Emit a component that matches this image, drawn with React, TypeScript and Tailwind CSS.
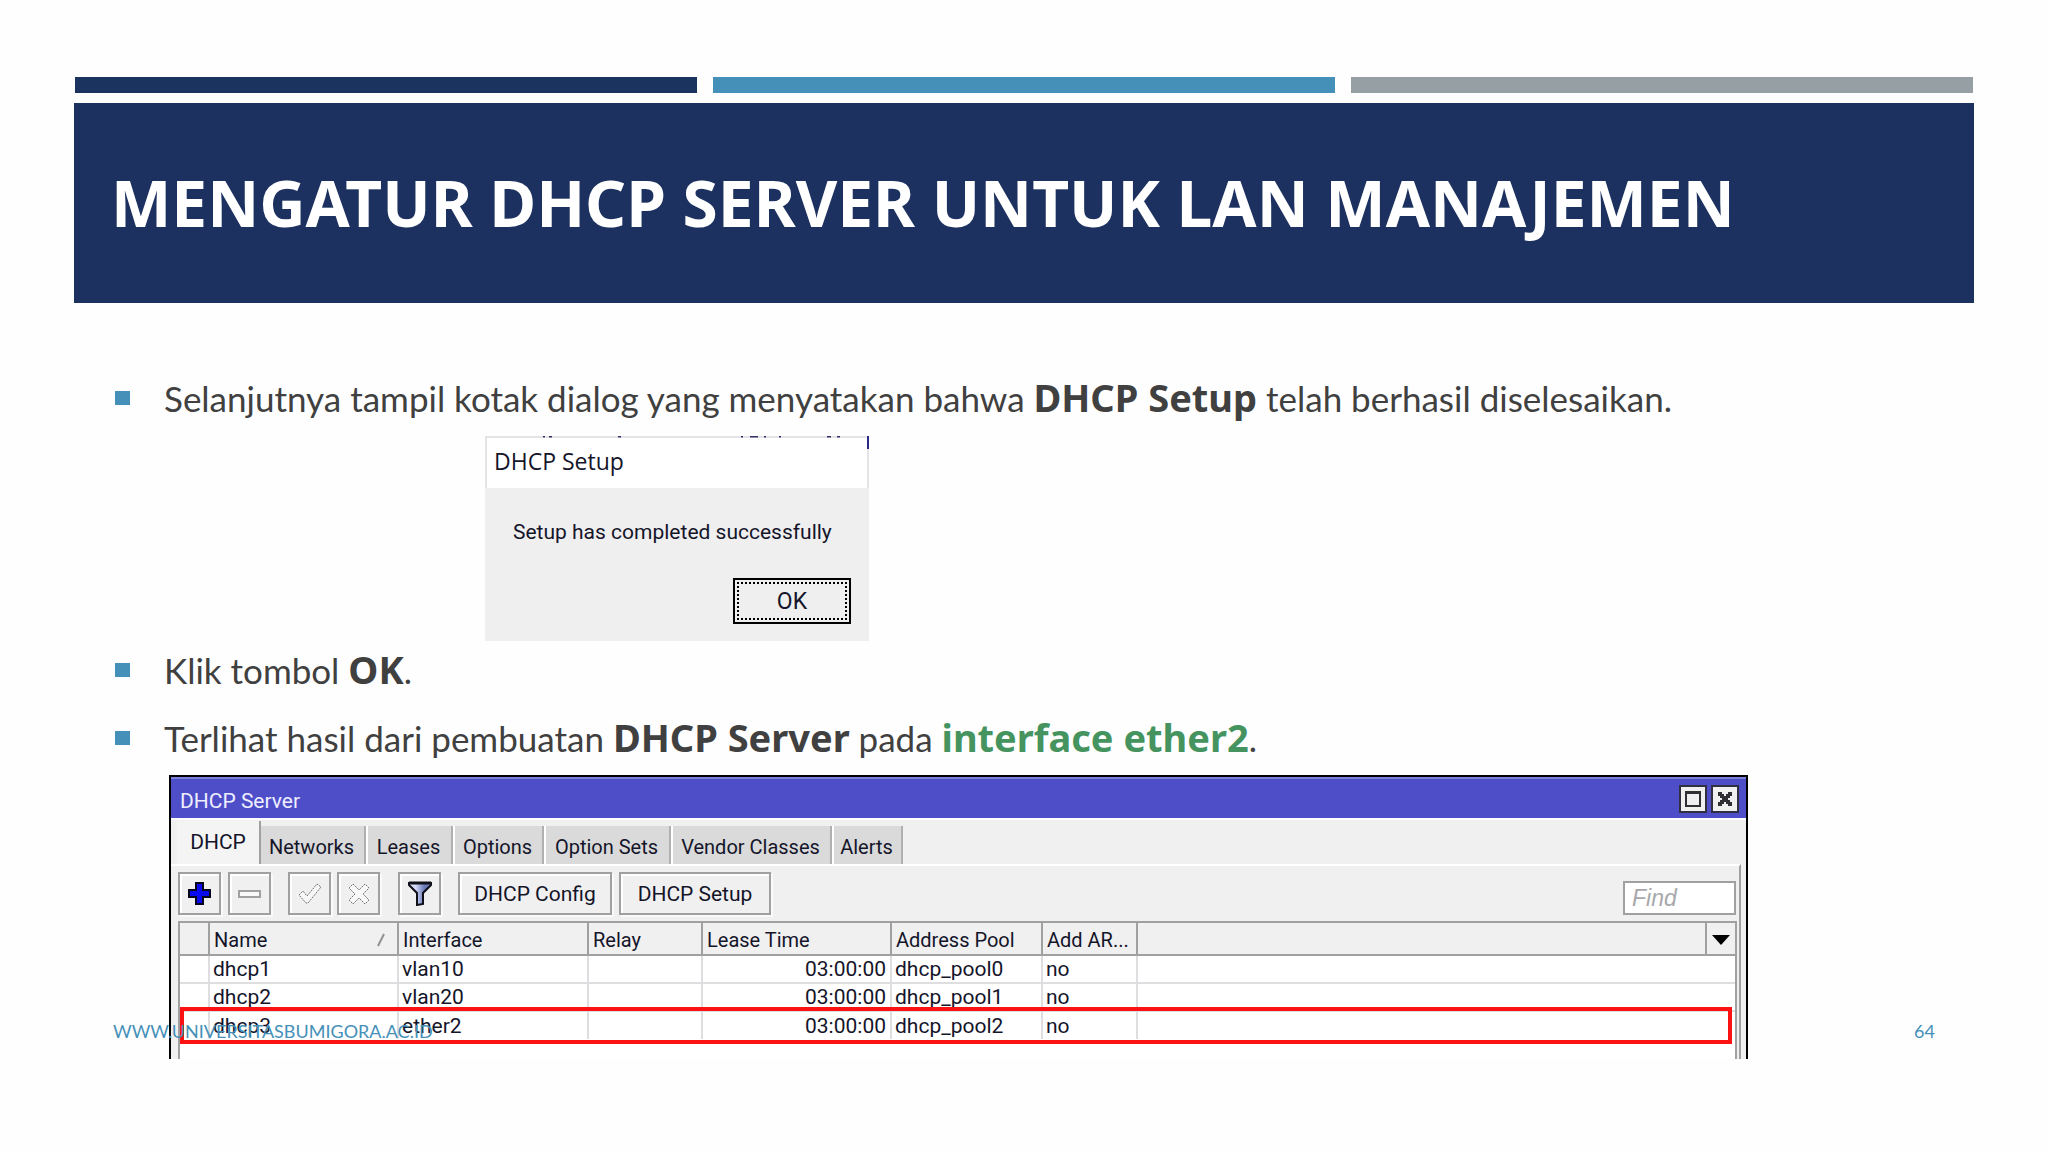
import type { ReactNode } from "react";

const tabs = ["Networks", "Leases", "Options", "Option Sets", "Vendor Classes", "Alerts"];
const tabWidths = ["w-[105px]", "w-[87px]", "w-[91px]", "w-[127px]", "w-[161px]", "w-[71px]"];

const leases = [
  { name: "dhcp1", iface: "vlan10", time: "03:00:00", pool: "dhcp_pool0", arp: "no" },
  { name: "dhcp2", iface: "vlan20", time: "03:00:00", pool: "dhcp_pool1", arp: "no" },
  { name: "dhcp3", iface: "ether2", time: "03:00:00", pool: "dhcp_pool2", arp: "no" },
];

function Bullet({ children }: { children: ReactNode }) {
  return (
    <div className="flex items-center gap-[34px] pl-[41px] text-[35px] leading-[48px] text-[#404040] [&_b]:font-['Noto_Sans',sans-serif] [&_b]:text-[38px] [&_b]:leading-none">
      <span className="h-[14px] w-[15px] shrink-0 bg-[#4590b8]" />
      <p>{children}</p>
    </div>
  );
}

function ToolButton({ label, children, className = "" }: { label: string; children: ReactNode; className?: string }) {
  return (
    <button
      aria-label={label}
      className={`flex h-[43px] w-[43px] items-center justify-center border-2 border-[#a0a0a0] bg-[#f0f0f0] shadow-[inset_2px_2px_0_#fff,2px_2px_0_#fafafa] ${className}`}
    >
      {children}
    </button>
  );
}

function SetupDialog() {
  return (
    <section aria-label="DHCP Setup" className="ml-[411px] flex h-[205px] w-[384px] flex-col bg-[#f0eff0] font-[Roboto,sans-serif] text-[#15152a]">
      <div className="relative flex h-[52px] items-center border-x-2 border-t-2 border-[#e4e4e6] bg-white pb-[3px] pl-[7px]">
        <h2 className="font-['Open_Sans',sans-serif] text-[23px]">DHCP Setup</h2>
        <svg className="absolute -top-[2px] left-0 h-[14px] w-[382px]" viewBox="0 0 382 14" aria-hidden="true">
          <path d="M56 0h2M62 0h3M131 0h3M254 0h2M263 0h8M277 0h2M292 0h2M340 0h4M350 0h3" stroke="#33336a" strokeWidth="3" />
          <path d="M381 0v13" stroke="#2a2a88" strokeWidth="2" />
        </svg>
      </div>
      <p className="mt-[29px] pl-[28px] text-[21px] leading-[30px]">Setup has completed successfully</p>
      <button className="mt-[31px] mr-[18px] h-[46px] w-[118px] self-end border-2 border-black bg-[#f0eff0] p-[2px] text-[23px]">
        <span className="flex h-full items-center justify-center border-2 border-dotted border-black pt-[2px]">OK</span>
      </button>
    </section>
  );
}

function ServerWindow() {
  return (
    <section aria-label="DHCP Server" className="mr-[226px] ml-[95px] flex h-[284px] flex-col overflow-hidden border-x-2 border-t-2 border-black bg-[#f0f0f1] font-[Roboto,sans-serif] text-[21px] text-[#15152a]">
      <header className="flex h-[41px] shrink-0 items-center justify-between border-t-2 border-[#7a80d8] bg-[#4f4ec9] pr-[7px] pl-[9px]">
        <h2 className="pt-[6px] text-[#eeeeff]">DHCP Server</h2>
        <div className="flex gap-1">
          <button aria-label="Maximize" className="flex h-[28px] w-[28px] items-center justify-center border-2 border-[#303040] bg-[#f0f0f0]">
            <svg className="h-[18px] w-[18px]" viewBox="0 0 18 18" aria-hidden="true">
              <path d="M1 1h16v3H1z" fill="#303034" />
              <path d="M2 2h14v14H2z" fill="none" stroke="#303034" strokeWidth="2" />
            </svg>
          </button>
          <button aria-label="Close" className="flex h-[28px] w-[28px] items-center justify-center border-2 border-[#303040] bg-[#f0f0f0]">
            <svg className="h-[16px] w-[16px]" viewBox="0 0 16 16" aria-hidden="true">
              <path d="M1 1h4v2h2v2h2v-2h2v-2h4v4h-2v2h-2v2h2v2h2v4h-4v-2h-2v-2h-2v2h-2v2h-4v-4h2v-2h2v-2h-2v-2h-2z" fill="#303034" />
            </svg>
          </button>
        </div>
      </header>

      <nav role="tablist" className="flex h-[46px] shrink-0 items-end border-t-2 border-white pl-[6px]">
        <button role="tab" aria-selected="true" className="h-[43px] w-[84px] border-r-2 border-[#a0a0a0] bg-[#f4f4f5]">
          DHCP
        </button>
        {tabs.map((tab, i) => (
          <button
            key={tab}
            role="tab"
            aria-selected="false"
            className={`h-[38px] shrink-0 border-r-2 border-[#b0b0b0] bg-[#dadada] pt-[3px] pr-[2px] text-center text-[20px] whitespace-nowrap ${i > 0 ? "border-l-2 border-l-white" : ""} ${tabWidths[i]}`}
          >
            {tab}
          </button>
        ))}
      </nav>

      <div className="mr-[5px] flex grow flex-col border-t-2 border-r-2 border-t-white border-r-[#a0a0a0] pr-[2px] pl-[7px]">
        <div className="flex shrink-0 items-end pt-[6px] pb-[6px]">
          <ToolButton label="Add">
            <svg className="h-[23px] w-[23px]" viewBox="0 0 23 23" aria-hidden="true">
              <path d="M8 1h7v7h7v7h-7v7H8v-7H1V8h7z" fill="#0a0af0" stroke="#05051e" strokeWidth="2" />
            </svg>
          </ToolButton>
          <ToolButton label="Remove" className="ml-[7px]">
            <svg className="h-[8px] w-[23px]" viewBox="0 0 23 8" aria-hidden="true">
              <path d="M1 1h21v6H1z" fill="#f8f8f8" stroke="#a0a0a0" strokeWidth="2" />
            </svg>
          </ToolButton>
          <ToolButton label="Enable" className="ml-[17px]">
            <svg className="h-[22px] w-[24px]" viewBox="0 0 24 22" aria-hidden="true">
              <path d="M1 12l4-4 4 5L19 1l4 3L10 20H8z" fill="#f8f8f8" stroke="#707070" strokeWidth="1" strokeDasharray="2 1" />
            </svg>
          </ToolButton>
          <ToolButton label="Disable" className="ml-[6px]">
            <svg className="h-[22px] w-[22px]" viewBox="0 0 22 22" aria-hidden="true">
              <path d="M5 1l6 6 6-6 4 4-6 6 6 6-4 4-6-6-6 6-4-4 6-6-6-6z" fill="#f8f8f8" stroke="#707070" strokeWidth="1" strokeDasharray="2 1" />
            </svg>
          </ToolButton>
          <ToolButton label="Filter" className="ml-[18px]">
            <svg className="h-[25px] w-[24px]" viewBox="0 0 24 25" aria-hidden="true">
              <defs>
                <linearGradient id="funnel">
                  <stop offset="0.3" stopColor="#d4daf8" />
                  <stop offset="0.7" stopColor="#6878b8" />
                </linearGradient>
              </defs>
              <path d="M1 2h22v2l-8 8v11l-6 1V12L1 4z" fill="url(#funnel)" stroke="#101018" strokeWidth="2" />
              <path d="M1 2h22" stroke="#101018" strokeWidth="3" />
            </svg>
          </ToolButton>
          <button className="ml-[17px] h-[43px] w-[154px] border-2 border-[#a0a0a0] bg-[#f0f0f0] pt-[2px] shadow-[inset_2px_2px_0_#fff,2px_2px_0_#fafafa]">
            DHCP Config
          </button>
          <button className="ml-[7px] h-[43px] w-[152px] border-2 border-[#a0a0a0] bg-[#f0f0f0] pt-[2px] shadow-[inset_2px_2px_0_#fff,2px_2px_0_#fafafa]">
            DHCP Setup
          </button>
          <input
            aria-label="Find"
            placeholder="Find"
            className="mr-px ml-auto h-[34px] w-[113px] border-2 border-[#a0a0a0] bg-white px-[7px] font-['Liberation_Sans',sans-serif] text-[23px] italic placeholder:text-[#a8a8ac]"
          />
        </div>

        <div className="relative grow border-x-2 border-t-2 border-[#a0a0a0] bg-white">
          <table className="w-full table-fixed border-collapse text-left leading-[24px]">
            <colgroup>
              <col className="w-[29px]" />
              <col className="w-[189px]" />
              <col className="w-[190px]" />
              <col className="w-[114px]" />
              <col className="w-[189px]" />
              <col className="w-[151px]" />
              <col className="w-[95px]" />
              <col />
              <col className="w-[29px]" />
            </colgroup>
            <thead>
              <tr className="h-[32px] border-b-2 border-[#a0a0a0] bg-[#f0f0f1] text-[20px] [&>th]:p-0 [&>th]:pt-[2px] [&>th]:pl-[4px] [&>th]:font-normal [&>th]:whitespace-nowrap [&>th:not(:last-child)]:border-r-2 [&>th:not(:last-child)]:border-[#a0a0a0]">
                <th />
                <th>
                  <div className="flex items-center justify-between pr-[10px]">
                    Name
                    <svg className="h-[14px] w-[10px]" viewBox="0 0 10 14" aria-hidden="true">
                      <path d="M1 13L7 1" stroke="#909090" strokeWidth="2" />
                    </svg>
                  </div>
                </th>
                <th>Interface</th>
                <th>Relay</th>
                <th>Lease Time</th>
                <th>Address Pool</th>
                <th>Add AR...</th>
                <th />
                <th>
                  <button aria-label="Choose columns" className="flex w-full items-center pl-px">
                    <svg className="h-[10px] w-[18px]" viewBox="0 0 18 10" aria-hidden="true">
                      <path d="M0 0h18L9 10z" fill="#000" />
                    </svg>
                  </button>
                </th>
              </tr>
            </thead>
            <tbody>
              {leases.map((row) => (
                <tr
                  key={row.name}
                  className="h-[28px] border-b-2 border-[#dedee0] last:border-b-0 [&>td]:p-0 [&>td]:pl-[3px] [&>td:nth-child(-n+7)]:border-r-2 [&>td:nth-child(-n+7)]:border-[#dedee0]"
                >
                  <td />
                  <td>{row.name}</td>
                  <td>{row.iface}</td>
                  <td />
                  <td className="text-right">
                    <span className="pr-[4px]">{row.time}</span>
                  </td>
                  <td>{row.pool}</td>
                  <td>{row.arp}</td>
                  <td colSpan={2} />
                </tr>
              ))}
            </tbody>
          </table>
          <div className="pointer-events-none absolute top-[84px] right-[3px] left-0 h-[37px] border-4 border-[#fb1212]" />
        </div>
      </div>
    </section>
  );
}

export default function App() {
  return (
    <main className="relative min-h-screen bg-[#fefefe] px-[74px] pt-[77px] font-[Lato,sans-serif]">
      <div className="grid grid-cols-3 gap-4 px-px">
        <div className="h-[16px] bg-[#1b335f]" />
        <div className="h-[16px] bg-[#4590b8]" />
        <div className="h-[16px] bg-[#969fa4]" />
      </div>
      <div className="mt-[10px] flex h-[200px] items-center bg-[#1c315f] pl-[37px]">
        <h1 className="font-['Noto_Sans',sans-serif] text-[64px] leading-[64px] font-bold text-white">MENGATUR DHCP SERVER UNTUK LAN MANAJEMEN</h1>
      </div>

      <div className="pt-[71px]">
        <Bullet>
          Selanjutnya tampil kotak dialog yang menyatakan bahwa <b>DHCP Setup</b> telah berhasil diselesaikan.
        </Bullet>
        <div className="pt-[14px] pb-[5px]">
          <SetupDialog />
        </div>
        <Bullet>
          Klik tombol <b>OK</b>.
        </Bullet>
        <div className="pt-[20px] pb-[13px]">
          <Bullet>
            Terlihat hasil dari pembuatan <b>DHCP Server</b> pada <b className="text-[#45945f]">interface ether2</b>.
          </Bullet>
        </div>
        <ServerWindow />
      </div>

      <footer className="absolute inset-x-[113px] bottom-[109px] flex justify-between text-[18px] leading-[24px] text-[#4590b8]">
        <span>WWW.UNIVERSITASBUMIGORA.AC.ID</span>
        <span>64</span>
      </footer>
    </main>
  );
}
